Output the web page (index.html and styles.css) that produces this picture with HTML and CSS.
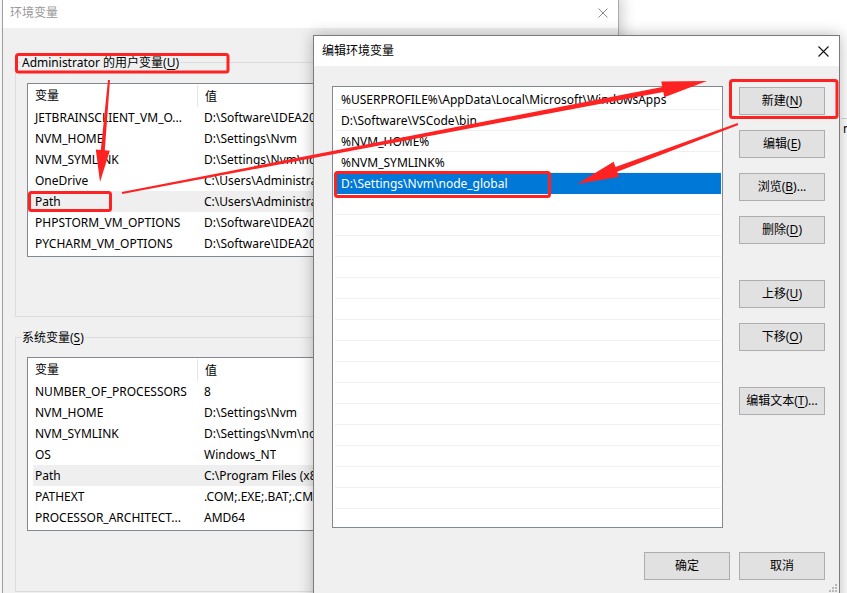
FILE: index.html
```html
<html>
<head>
	<title>环境变量</title>
	<link rel="stylesheet" href="styles.css">
</head>
<body>
<div class="desktop">

	<div class="behind">
		<span class="behind-char">n</span>
	</div>

	<!-- background window: 环境变量 -->
	<div class="win env-win">
		<div class="titlebar inactive">
			<span class="title">环境变量</span>
			<svg class="close-x" width="10" height="10" viewBox="0 0 10 10"><path d="M0.5 0.5L9.5 9.5M9.5 0.5L0.5 9.5" stroke="#8a8a8a" stroke-width="1"/></svg>
		</div>
		<div class="win-body env-body">
			<fieldset class="group user-group">
				<legend>Administrator 的用户变量(<u>U</u>)</legend>
				<div class="varlist">
					<div class="var-head"><span class="c1">变量</span><span class="c2">值</span></div>
					<div class="var-row"><span class="c1">JETBRAINSCLIENT_VM_O...</span><span class="c2">D:\Software\IDEA2021.2\bin\jetbrains_client64.exe.vmoptions</span></div>
					<div class="var-row"><span class="c1">NVM_HOME</span><span class="c2">D:\Settings\Nvm</span></div>
					<div class="var-row"><span class="c1">NVM_SYMLINK</span><span class="c2">D:\Settings\Nvm\nodejs</span></div>
					<div class="var-row"><span class="c1">OneDrive</span><span class="c2">C:\Users\Administrator\OneDrive</span></div>
					<div class="var-row picked"><span class="c1">Path</span><span class="c2">C:\Users\Administrator\AppData\Local\Microsoft\WindowsApps</span></div>
					<div class="var-row"><span class="c1">PHPSTORM_VM_OPTIONS</span><span class="c2">D:\Software\IDEA2021.2\bin\phpstorm.vmoptions</span></div>
					<div class="var-row"><span class="c1">PYCHARM_VM_OPTIONS</span><span class="c2">D:\Software\IDEA2021.2\bin\pycharm.vmoptions</span></div>
				</div>
			</fieldset>
			<fieldset class="group sys-group">
				<legend>系统变量(<u>S</u>)</legend>
				<div class="varlist">
					<div class="var-head"><span class="c1">变量</span><span class="c2">值</span></div>
					<div class="var-row"><span class="c1">NUMBER_OF_PROCESSORS</span><span class="c2">8</span></div>
					<div class="var-row"><span class="c1">NVM_HOME</span><span class="c2">D:\Settings\Nvm</span></div>
					<div class="var-row"><span class="c1">NVM_SYMLINK</span><span class="c2">D:\Settings\Nvm\nodejs</span></div>
					<div class="var-row"><span class="c1">OS</span><span class="c2">Windows_NT</span></div>
					<div class="var-row picked sys-picked"><span class="c1">Path</span><span class="c2">C:\Program Files (x86)\Common Files\Oracle\Java\javapath</span></div>
					<div class="var-row"><span class="c1">PATHEXT</span><span class="c2">.COM;.EXE;.BAT;.CMD;.VBS;.VBE;.JS;.JSE;.WSF;.WSH;.MSC</span></div>
					<div class="var-row"><span class="c1">PROCESSOR_ARCHITECT...</span><span class="c2">AMD64</span></div>
				</div>
			</fieldset>
		</div>
	</div>

	<!-- front dialog: 编辑环境变量 -->
	<div class="win edit-win">
		<div class="titlebar">
			<span class="title">编辑环境变量</span>
			<svg class="close-x" width="11" height="11" viewBox="0 0 11 11"><path d="M0.5 0.5L10.5 10.5M10.5 0.5L0.5 10.5" stroke="#111" stroke-width="1.1"/></svg>
		</div>
		<div class="win-body edit-body">
			<div class="edit-main">
				<div class="pathlist">
					<div class="path-row">%USERPROFILE%\AppData\Local\Microsoft\WindowsApps</div>
					<div class="path-row">D:\Software\VSCode\bin</div>
					<div class="path-row">%NVM_HOME%</div>
					<div class="path-row">%NVM_SYMLINK%</div>
					<div class="path-row selected">D:\Settings\Nvm\node_global</div>
					<div class="path-row"></div>
					<div class="path-row"></div>
					<div class="path-row"></div>
					<div class="path-row"></div>
					<div class="path-row"></div>
					<div class="path-row"></div>
					<div class="path-row"></div>
					<div class="path-row"></div>
					<div class="path-row"></div>
					<div class="path-row"></div>
					<div class="path-row"></div>
					<div class="path-row"></div>
					<div class="path-row"></div>
					<div class="path-row"></div>
					<div class="path-row"></div>
					<div class="path-row"></div>
				</div>
				<div class="side-buttons">
					<button class="btn">新建(<u>N</u>)</button>
					<button class="btn">编辑(<u>E</u>)</button>
					<button class="btn">浏览(<u>B</u>)...</button>
					<button class="btn">删除(<u>D</u>)</button>
					<button class="btn gap-big">上移(<u>U</u>)</button>
					<button class="btn">下移(<u>O</u>)</button>
					<button class="btn gap-big">编辑文本(<u>T</u>)...</button>
				</div>
			</div>
			<div class="bottom-buttons">
				<button class="btn">确定</button>
				<button class="btn">取消</button>
			</div>
			<svg class="grip" width="8" height="8" viewBox="0 0 8 8">
				<rect x="6" y="0" width="2" height="2" fill="#b8b8b8"/>
				<rect x="3" y="3" width="2" height="2" fill="#b8b8b8"/>
				<rect x="6" y="3" width="2" height="2" fill="#b8b8b8"/>
				<rect x="0" y="6" width="2" height="2" fill="#b8b8b8"/>
				<rect x="3" y="6" width="2" height="2" fill="#b8b8b8"/>
				<rect x="6" y="6" width="2" height="2" fill="#b8b8b8"/>
			</svg>
		</div>
	</div>

	<!-- red annotations drawn over the screenshot -->
	<svg class="marks" width="847" height="593" viewBox="0 0 847 593">
		<g fill="none" stroke="#ff2222" stroke-width="3">
			<rect x="16.5" y="54.5" width="211.5" height="17.5" rx="2"/>
			<rect x="29.5" y="192.5" width="81" height="18" rx="2"/>
			<rect x="730.5" y="80.5" width="106.5" height="37" rx="2"/>
			<rect x="335.5" y="172.5" width="214" height="24" rx="2"/>
		</g>
		<g fill="#ff2222">
			<polygon points="108,79.9 100.8,149.9 95.8,149.5 100,182 109.8,150.7 104.8,150.3 110,80.1"/>
			<polygon points="122.2,194 663.3,91.9 664.3,97.3 707,81 661.3,81.6 662.3,87 121.8,192"/>
			<polygon points="737.7,123.1 615.5,167 613.6,161.8 577,184 619.2,176.8 617.2,171.7 738.3,124.9"/>
		</g>
	</svg>
</div>
</body>
</html>
```

FILE: styles.css
```css
html, body {
	margin: 0;
	padding: 0;
}

body {
	font-family: "Noto Sans", "Noto Sans CJK SC", sans-serif;
	font-size: 12px;
	color: #000;
	background: #fff;
}

.desktop {
	position: relative;
	width: 847px;
	height: 593px;
	overflow: hidden;
	background: #fff;
}

u {
	text-decoration-thickness: 1px;
	text-underline-offset: 2px;
}

/* window behind everything, only its edge shows on the right */
.behind {
	position: absolute;
	left: 841px;
	top: 118px;
	width: 6px;
	height: 40px;
	overflow: hidden;
	border-top: 1px solid #d9d9d9;
}

.behind-char {
	display: block;
	padding: 2px 0 0 2px;
	line-height: 16px;
}

.win {
	position: absolute;
	box-sizing: border-box;
	display: flex;
	flex-direction: column;
}

.titlebar {
	display: flex;
	align-items: center;
	justify-content: space-between;
	background: #fff;
	flex: none;
}

.titlebar .title {
	line-height: 16px;
}

.titlebar.inactive .title {
	color: #999;
}

.win-body {
	flex: 1;
	background: #f0f0f0;
}

/* 环境变量 */
.env-win {
	left: 2px;
	top: -4px;
	width: 617px;
	height: 610px;
	border-left: 1px solid #a0a0a0;
	border-right: 1px solid #aaa;
	box-shadow: 4px 0 12px rgba(0, 0, 0, 0.18);
}

.env-win .titlebar {
	height: 32px;
	padding: 2px 10px 0 7px;
	box-sizing: border-box;
}

.env-body {
	padding: 26px 12px 0 12px;
}

.group {
	margin: 0;
	padding: 0 11px;
	border: 1px solid #dcdcdc;
	min-width: 0;
}

.group legend {
	margin-left: -6px;
	padding: 0 1px;
	line-height: 17px;
}

.user-group {
	padding-top: 12px;
	padding-bottom: 59px;
}

.sys-group {
	margin-top: 12px;
	padding-top: 11px;
	padding-bottom: 60px;
}

.varlist {
	background: #fff;
	border: 1px solid #828790;
	height: 174px;
	box-sizing: border-box;
	overflow: hidden;
}

.var-head,
.var-row {
	display: flex;
	white-space: nowrap;
}

.var-head {
	height: 23px;
	align-items: center;
}

.var-head .c1 {
	border-right: 1px solid #e5e5e5;
	height: 22px;
	line-height: 22px;
}

.var-row {
	height: 21px;
	line-height: 21px;
}

.c1 {
	flex: none;
	width: 162px;
	padding-left: 7px;
	overflow: hidden;
}

.c2 {
	padding-left: 7px;
	overflow: hidden;
}

.var-row.picked {
	background: #efefef;
}

.var-row.sys-picked {
	margin-left: 5px;
}

.var-row.sys-picked .c1 {
	width: 162px;
	padding-left: 2px;
}

/* 编辑环境变量 */
.edit-win {
	left: 313px;
	top: 35px;
	width: 527px;
	height: 600px;
	border: 1px solid #7a7a7a;
	box-shadow: 0 0 14px rgba(0, 0, 0, 0.28);
}

.edit-win .titlebar {
	height: 30px;
	padding: 0 10px 0 8px;
}

.edit-body {
	position: relative;
	padding: 20px 14px 0 18px;
}

.edit-main {
	display: flex;
	gap: 16px;
}

.pathlist {
	width: 391px;
	height: 442px;
	box-sizing: border-box;
	border: 1px solid #828790;
	background: #fff;
	padding: 2px 1px 0 2px;
	overflow: hidden;
}

.path-row {
	height: 21px;
	box-sizing: border-box;
	border-bottom: 1px solid #f0f0f0;
	padding-left: 6px;
	line-height: 21px;
	white-space: nowrap;
}

.path-row.selected {
	background: #0078d7;
	color: #fff;
	border-bottom-color: #0078d7;
}

.side-buttons {
	display: flex;
	flex-direction: column;
	gap: 15px;
	padding-top: 1px;
}

.side-buttons .gap-big {
	margin-top: 21px;
}

.btn {
	width: 86px;
	height: 28px;
	box-sizing: border-box;
	border: 1px solid #adadad;
	background: #e1e1e1;
	font-family: "Noto Sans", "Noto Sans CJK SC", sans-serif;
	font-size: 12px;
	color: #000;
	padding: 0;
	line-height: 16px;
}

.bottom-buttons {
	display: flex;
	justify-content: flex-end;
	gap: 9px;
	margin-top: 24px;
}

.grip {
	position: absolute;
	right: 2px;
	top: 518px;
}

.marks {
	position: absolute;
	left: 0;
	top: 0;
	pointer-events: none;
}
```
